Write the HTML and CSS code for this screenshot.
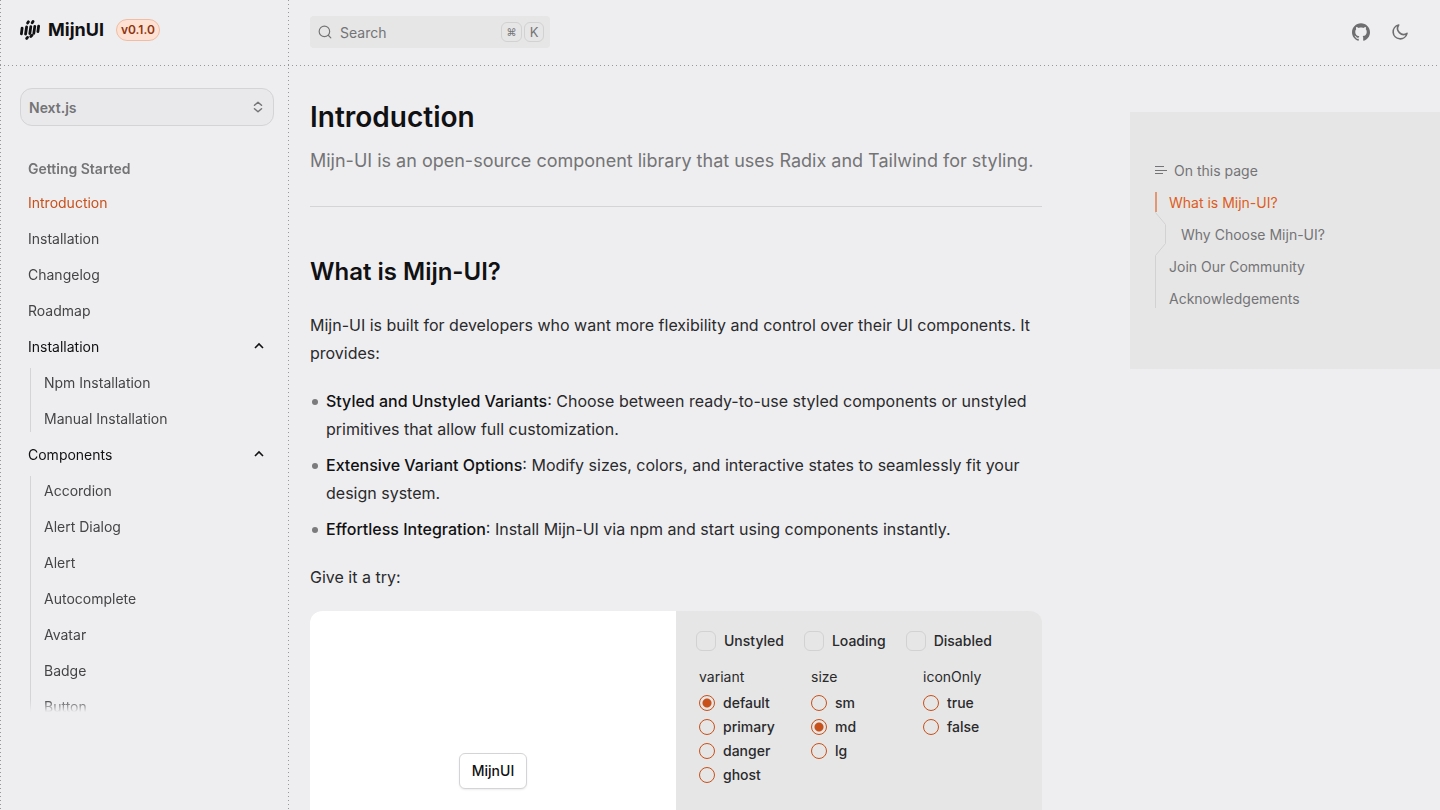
FILE: index.html
```html
<!DOCTYPE html>
<html lang="en">
<head>
    <meta charset="UTF-8">
    <meta name="viewport" content="width=device-width, initial-scale=1.0">
    <title>Introduction - MijnUI</title>
    <link rel="stylesheet" href="styles.css">
</head>
<body>
    <div class="layout">
        <!-- Sidebar -->
        <aside class="sidebar">
            <div class="brand">
                <a href="#" class="brand-link">
                    <svg class="logo" viewBox="0 0 20 20" fill="none" stroke="currentColor" stroke-width="2.8" stroke-linecap="round">
                        <path d="M2.1 8.2L1.4 13.8M6.6 7L5.6 14M10.8 6.6L9.8 13.6M14.8 6.4L13.8 13.4M18.6 6.2L17.9 11.6"/>
                        <path d="M8.4 1.8L7.6 3M13 1.5L12.2 2.8M7.5 17.4L6.7 18.4M12 15.2L10.8 16.4"/>
                    </svg>
                    MijnUI
                </a>
                <span class="version">v0.1.0</span>
            </div>

            <div class="framework">
                <select class="framework-select" aria-label="Framework">
                    <option>Next.js</option>
                    <option>Vite</option>
                </select>
                <svg class="framework-icon" viewBox="0 0 24 24" fill="none" stroke="currentColor" stroke-width="3" stroke-linecap="round" stroke-linejoin="round">
                    <path d="M5 8.5l7-6 7 6M5 15.5l7 6 7-6"/>
                </svg>
            </div>

            <nav class="sidebar-nav">
                <h4 class="nav-title">Getting Started</h4>
                <ul class="nav-list">
                    <li><a href="#" class="active">Introduction</a></li>
                    <li><a href="#">Installation</a></li>
                    <li><a href="#">Changelog</a></li>
                    <li><a href="#">Roadmap</a></li>
                </ul>

                <button class="nav-group">
                    Installation
                    <svg class="chevron" viewBox="0 0 12 12" fill="none" stroke="currentColor" stroke-width="1.6"><path d="M2 7l4-4 4 4"/></svg>
                </button>
                <ul class="nav-sublist">
                    <li><a href="#">Npm Installation</a></li>
                    <li><a href="#">Manual Installation</a></li>
                </ul>

                <button class="nav-group">
                    Components
                    <svg class="chevron" viewBox="0 0 12 12" fill="none" stroke="currentColor" stroke-width="1.6"><path d="M2 7l4-4 4 4"/></svg>
                </button>
                <ul class="nav-sublist">
                    <li><a href="#">Accordion</a></li>
                    <li><a href="#">Alert Dialog</a></li>
                    <li><a href="#">Alert</a></li>
                    <li><a href="#">Autocomplete</a></li>
                    <li><a href="#">Avatar</a></li>
                    <li><a href="#">Badge</a></li>
                    <li><a href="#">Button</a></li>
                </ul>
            </nav>
        </aside>

        <div class="content">
            <!-- Top bar -->
            <header class="topbar">
                <label class="search">
                    <svg class="search-icon" viewBox="0 0 24 24" fill="none" stroke="currentColor" stroke-width="2" stroke-linecap="round">
                        <circle cx="11" cy="11" r="9"/><path d="M18 18l4 4"/>
                    </svg>
                    <input type="text" class="search-input" placeholder="Search" aria-label="Search">
                    <kbd class="key key-cmd">⌘</kbd>
                    <kbd class="key">K</kbd>
                </label>
                <div class="topbar-actions">
                    <a href="#" aria-label="GitHub">
                        <svg class="github" viewBox="0 0 24 24" fill="currentColor">
                            <path d="M12 .297c-6.63 0-12 5.373-12 12 0 5.303 3.438 9.8 8.205 11.385.6.113.82-.258.82-.577 0-.285-.01-1.04-.015-2.04-3.338.724-4.042-1.61-4.042-1.61C4.422 18.07 3.633 17.7 3.633 17.7c-1.087-.744.084-.729.084-.729 1.205.084 1.838 1.236 1.838 1.236 1.07 1.835 2.809 1.305 3.495.998.108-.776.417-1.305.76-1.605-2.665-.3-5.466-1.332-5.466-5.93 0-1.31.465-2.38 1.235-3.22-.135-.303-.54-1.523.105-3.176 0 0 1.005-.322 3.3 1.23.96-.267 1.98-.399 3-.405 1.02.006 2.04.138 3 .405 2.28-1.552 3.285-1.23 3.285-1.23.645 1.653.24 2.873.12 3.176.765.84 1.23 1.91 1.23 3.22 0 4.61-2.805 5.625-5.475 5.92.42.36.81 1.096.81 2.22 0 1.606-.015 2.896-.015 3.286 0 .315.21.69.825.57C20.565 22.092 24 17.592 24 12.297c0-6.627-5.373-12-12-12"/>
                        </svg>
                    </a>
                    <button class="theme-toggle" aria-label="Toggle theme">
                        <svg class="moon" viewBox="0 0 24 24" fill="none" stroke="currentColor" stroke-width="2.4" stroke-linejoin="round">
                            <path d="M10 1.5A10.5 10.5 0 1 0 22.5 14A9 9 0 0 1 10 1.5z"/>
                        </svg>
                    </button>
                </div>
            </header>

            <div class="page">
                <main class="article">
                    <h1>Introduction</h1>
                    <p class="lead">Mijn-UI is an open-source component library that uses Radix and Tailwind for styling.</p>
                    <hr>
                    <h2>What is Mijn-UI?</h2>
                    <p>Mijn-UI is built for developers who want more flexibility and control over their UI components. It provides:</p>
                    <ul class="features">
                        <li><strong>Styled and Unstyled Variants</strong>: Choose between ready-to-use styled components or unstyled primitives that allow full customization.</li>
                        <li><strong>Extensive Variant Options</strong>: Modify sizes, colors, and interactive states to seamlessly fit your design system.</li>
                        <li><strong>Effortless Integration</strong>: Install Mijn-UI via npm and start using components instantly.</li>
                    </ul>
                    <p>Give it a try:</p>

                    <!-- Playground -->
                    <div class="demo">
                        <div class="demo-preview">
                            <button class="demo-button">MijnUI</button>
                        </div>
                        <form class="demo-controls">
                            <div class="checks">
                                <label class="check"><input type="checkbox">Unstyled</label>
                                <label class="check"><input type="checkbox">Loading</label>
                                <label class="check"><input type="checkbox">Disabled</label>
                            </div>
                            <div class="options">
                                <fieldset>
                                    <legend>variant</legend>
                                    <label class="option"><input type="radio" name="variant" checked>default</label>
                                    <label class="option"><input type="radio" name="variant">primary</label>
                                    <label class="option"><input type="radio" name="variant">danger</label>
                                    <label class="option"><input type="radio" name="variant">ghost</label>
                                </fieldset>
                                <fieldset>
                                    <legend>size</legend>
                                    <label class="option"><input type="radio" name="size">sm</label>
                                    <label class="option"><input type="radio" name="size" checked>md</label>
                                    <label class="option"><input type="radio" name="size">lg</label>
                                </fieldset>
                                <fieldset>
                                    <legend>iconOnly</legend>
                                    <label class="option"><input type="radio" name="iconOnly">true</label>
                                    <label class="option"><input type="radio" name="iconOnly">false</label>
                                </fieldset>
                            </div>
                        </form>
                    </div>
                </main>

                <!-- Table of contents -->
                <aside class="toc">
                    <h3 class="toc-title">
                        <svg class="toc-icon" viewBox="0 0 12 12" fill="none" stroke="currentColor"><path d="M0 1.5h9M0 5.5h12M0 8.5h8"/></svg>
                        On this page
                    </h3>
                    <div class="toc-body">
                        <svg class="toc-line" viewBox="0 0 14 116" fill="none">
                            <path d="M.5 0V20.5L10.5 32.5V51.5L.5 63.5V116" stroke="#d2d2d2"/>
                            <path d="M1 0V20" stroke="#e39873" stroke-width="2"/>
                        </svg>
                        <ul class="toc-list">
                            <li><a href="#" class="active">What is Mijn-UI?</a></li>
                            <li class="nested"><a href="#">Why Choose Mijn-UI?</a></li>
                            <li><a href="#">Join Our Community</a></li>
                            <li><a href="#">Acknowledgements</a></li>
                        </ul>
                    </div>
                </aside>
            </div>
        </div>
    </div>
</body>
</html>
```
FILE: styles.css
```css
:root {
    --bg: #eeeef0;
    --panel: #e6e6e6;
    --line: #d4d4d6;
    --dot: #98989b;
    --text: #2a2a2c;
    --strong: #111113;
    --muted: #747476;
    --orange: #c8501b;
}

* {
    box-sizing: border-box;
}

body {
    margin: 0;
    font-family: Inter, sans-serif;
    font-size: 14px;
    line-height: 20px;
    color: var(--text);
    background-color: var(--bg);
}

h1, h2, h3, h4, p, ul, fieldset {
    margin: 0;
    padding: 0;
}

ul {
    list-style: none;
}

a {
    color: inherit;
    text-decoration: none;
}

button, input, select {
    font: inherit;
    color: inherit;
}

button {
    padding: 0;
    border: none;
    background: none;
    cursor: pointer;
}

svg {
    display: block;
    flex-shrink: 0;
}

.layout {
    display: flex;
    align-items: flex-start;
}

/* Sidebar with dotted lines on both sides */
.sidebar {
    position: sticky;
    top: 0;
    display: flex;
    flex-direction: column;
    flex-shrink: 0;
    width: 289px;
    height: 100vh;
    padding-bottom: 98px;
    background-image: linear-gradient(var(--dot) 1px, transparent 1px), linear-gradient(var(--dot) 1px, transparent 1px);
    background-size: 1px 4px;
    background-position: left top, right top;
    background-repeat: repeat-y;
}

.brand, .topbar {
    display: flex;
    align-items: center;
    flex-shrink: 0;
    height: 66px;
    background-image: linear-gradient(90deg, var(--dot) 1px, transparent 1px);
    background-size: 4px 1px;
    background-position: left bottom;
    background-repeat: repeat-x;
}

.brand {
    gap: 12px;
    padding: 0 20px 6px;
}

.brand-link {
    display: flex;
    align-items: center;
    gap: 8px;
    font-size: 18px;
    font-weight: 700;
    line-height: 28px;
    color: var(--strong);
}

.logo {
    width: 20px;
    height: 20px;
}

.version {
    padding: 0 4px;
    border: 1px solid #efbda3;
    border-radius: 12px;
    font-size: 12px;
    font-weight: 600;
    color: #8c3510;
    background-color: #ffe1d3;
}

.framework {
    position: relative;
    margin: 22px 15px 0 20px;
    color: var(--muted);
}

.framework-select {
    display: block;
    width: 100%;
    height: 38px;
    padding: 2px 8px 0;
    border: 1px solid var(--line);
    border-radius: 12px;
    font-weight: 600;
    background-color: #e9e9eb;
    appearance: none;
}

.framework-icon {
    position: absolute;
    top: 13px;
    right: 10px;
    width: 12px;
    height: 12px;
    pointer-events: none;
}

.sidebar-nav {
    flex: 1;
    min-height: 0;
    overflow: hidden;
    margin: 0 15px 0 20px;
    padding: 33px 8px 0;
    mask-image: linear-gradient(to bottom, #000 calc(100% - 12px), transparent);
}

.nav-title {
    margin-bottom: 14px;
    font-size: 14px;
    font-weight: 600;
    color: var(--muted);
}

.nav-list, .nav-sublist {
    display: flex;
    flex-direction: column;
    gap: 16px;
    color: #454547;
}

.nav-list {
    margin-bottom: 16px;
}

.nav-list .active {
    color: var(--orange);
}

.nav-group {
    display: flex;
    justify-content: space-between;
    align-items: center;
    width: 100%;
    color: var(--strong);
}

.chevron {
    width: 12px;
    height: 12px;
    margin-right: 1px;
}

.nav-sublist {
    margin: 11px 0 13px 2px;
    padding: 5px 0 3px 13px;
    border-left: 1px solid var(--line);
}

/* Top bar */
.content {
    flex: 1;
    min-width: 0;
}

.topbar {
    justify-content: space-between;
    padding: 0 32px 2px 21px;
    background-position: 3px bottom;
}

.search {
    display: flex;
    align-items: center;
    gap: 2px;
    width: 240px;
    height: 32px;
    padding: 0 6px 0 8px;
    border-radius: 4px;
    color: var(--muted);
    background-color: var(--panel);
}

.search-icon {
    width: 14px;
    height: 14px;
}

.search-input {
    flex: 1;
    min-width: 0;
    padding: 2px 6px 0;
    border: none;
    outline: none;
    background: none;
}

.search-input::placeholder {
    color: var(--muted);
    opacity: 1;
}

.key {
    width: 20px;
    height: 20px;
    border: 1px solid #d2d2d2;
    border-radius: 6px;
    font-family: inherit;
    font-size: 13px;
    line-height: 18px;
    text-align: center;
}

.key-cmd {
    width: 21px;
    font-size: 10px;
}

.topbar-actions {
    display: flex;
    align-items: center;
    gap: 22px;
    color: #6e6e70;
}

.github {
    width: 18px;
    height: 18px;
}

.moon {
    width: 16px;
    height: 16px;
}

/* Page content */
.page {
    display: flex;
    align-items: flex-start;
}

.article {
    flex: 1;
    min-width: 0;
    padding: 33px 88px 48px 21px;
    font-size: 16px;
    line-height: 28px;
}

.article h1 {
    margin-bottom: 12px;
    font-size: 28px;
    font-weight: 600;
    line-height: 36px;
    color: var(--strong);
}

.article .lead {
    margin: 0 0 31px;
    font-size: 18px;
    color: var(--muted);
}

.article hr {
    margin: 0 0 49px;
    border: none;
    border-top: 1px solid var(--line);
}

.article h2 {
    margin-bottom: 23px;
    font-size: 24px;
    font-weight: 600;
    line-height: 32px;
    color: var(--strong);
}

.article p {
    margin-bottom: 20px;
}

.features {
    display: flex;
    flex-direction: column;
    gap: 8px;
    margin-bottom: 20px;
}

.features li {
    position: relative;
    padding-left: 16px;
}

.features li::before {
    content: "";
    position: absolute;
    top: 12px;
    left: 2px;
    width: 6px;
    height: 6px;
    border-radius: 50%;
    background-color: #7b7b7d;
}

.features strong {
    font-weight: 500;
    color: var(--strong);
}

.demo {
    display: grid;
    grid-template-columns: repeat(2, minmax(0, 1fr));
    min-height: 320px;
    overflow: hidden;
    border-radius: 12px;
    font-size: 14px;
    line-height: 20px;
    background-color: var(--panel);
}

.demo-preview {
    display: flex;
    align-items: center;
    justify-content: center;
    background-color: #fff;
}

.demo-button {
    height: 36px;
    padding: 0 12px;
    border: 1px solid var(--line);
    border-radius: 6px;
    font-weight: 500;
    color: var(--strong);
    background-color: #fff;
    box-shadow: 0 1px 2px rgba(0, 0, 0, 0.08);
}

.demo-controls {
    padding: 20px;
}

.checks {
    display: flex;
    gap: 20px;
    margin-bottom: 16px;
}

.check, .option {
    display: flex;
    align-items: center;
    gap: 8px;
    font-weight: 500;
}

.check input, .option input {
    flex-shrink: 0;
    margin: 0;
    appearance: none;
}

.check input {
    width: 20px;
    height: 20px;
    border: 1px solid #d2d2d2;
    border-radius: 6px;
}

.check input:checked {
    background-color: var(--orange);
}

.options {
    display: grid;
    grid-template-columns: repeat(3, 112px);
    padding-left: 3px;
}

.options fieldset {
    min-width: 0;
    border: none;
}

.options legend {
    padding: 0;
    margin-bottom: 4px;
}

.option {
    height: 24px;
}

.option input {
    width: 16px;
    height: 16px;
    border: 1px solid var(--orange);
    border-radius: 50%;
}

.option input:checked {
    background: radial-gradient(circle, var(--orange) 4px, transparent 5px);
}

/* Table of contents */
.toc {
    flex-shrink: 0;
    width: 310px;
    margin-top: 46px;
    padding: 49px 24px 60px 25px;
    color: var(--muted);
    background-color: var(--panel);
}

.toc-title {
    display: flex;
    align-items: center;
    gap: 7px;
    margin-bottom: 11px;
    font-size: 14px;
    font-weight: 400;
}

.toc-icon {
    width: 12px;
    height: 12px;
}

.toc-body {
    display: flex;
}

.toc-line {
    width: 14px;
    height: 116px;
}

.toc-list {
    display: flex;
    flex-direction: column;
    gap: 12px;
    padding-top: 1px;
}

.toc-list .nested {
    padding-left: 12px;
}

.toc-list .active {
    color: #df5c20;
}
```
